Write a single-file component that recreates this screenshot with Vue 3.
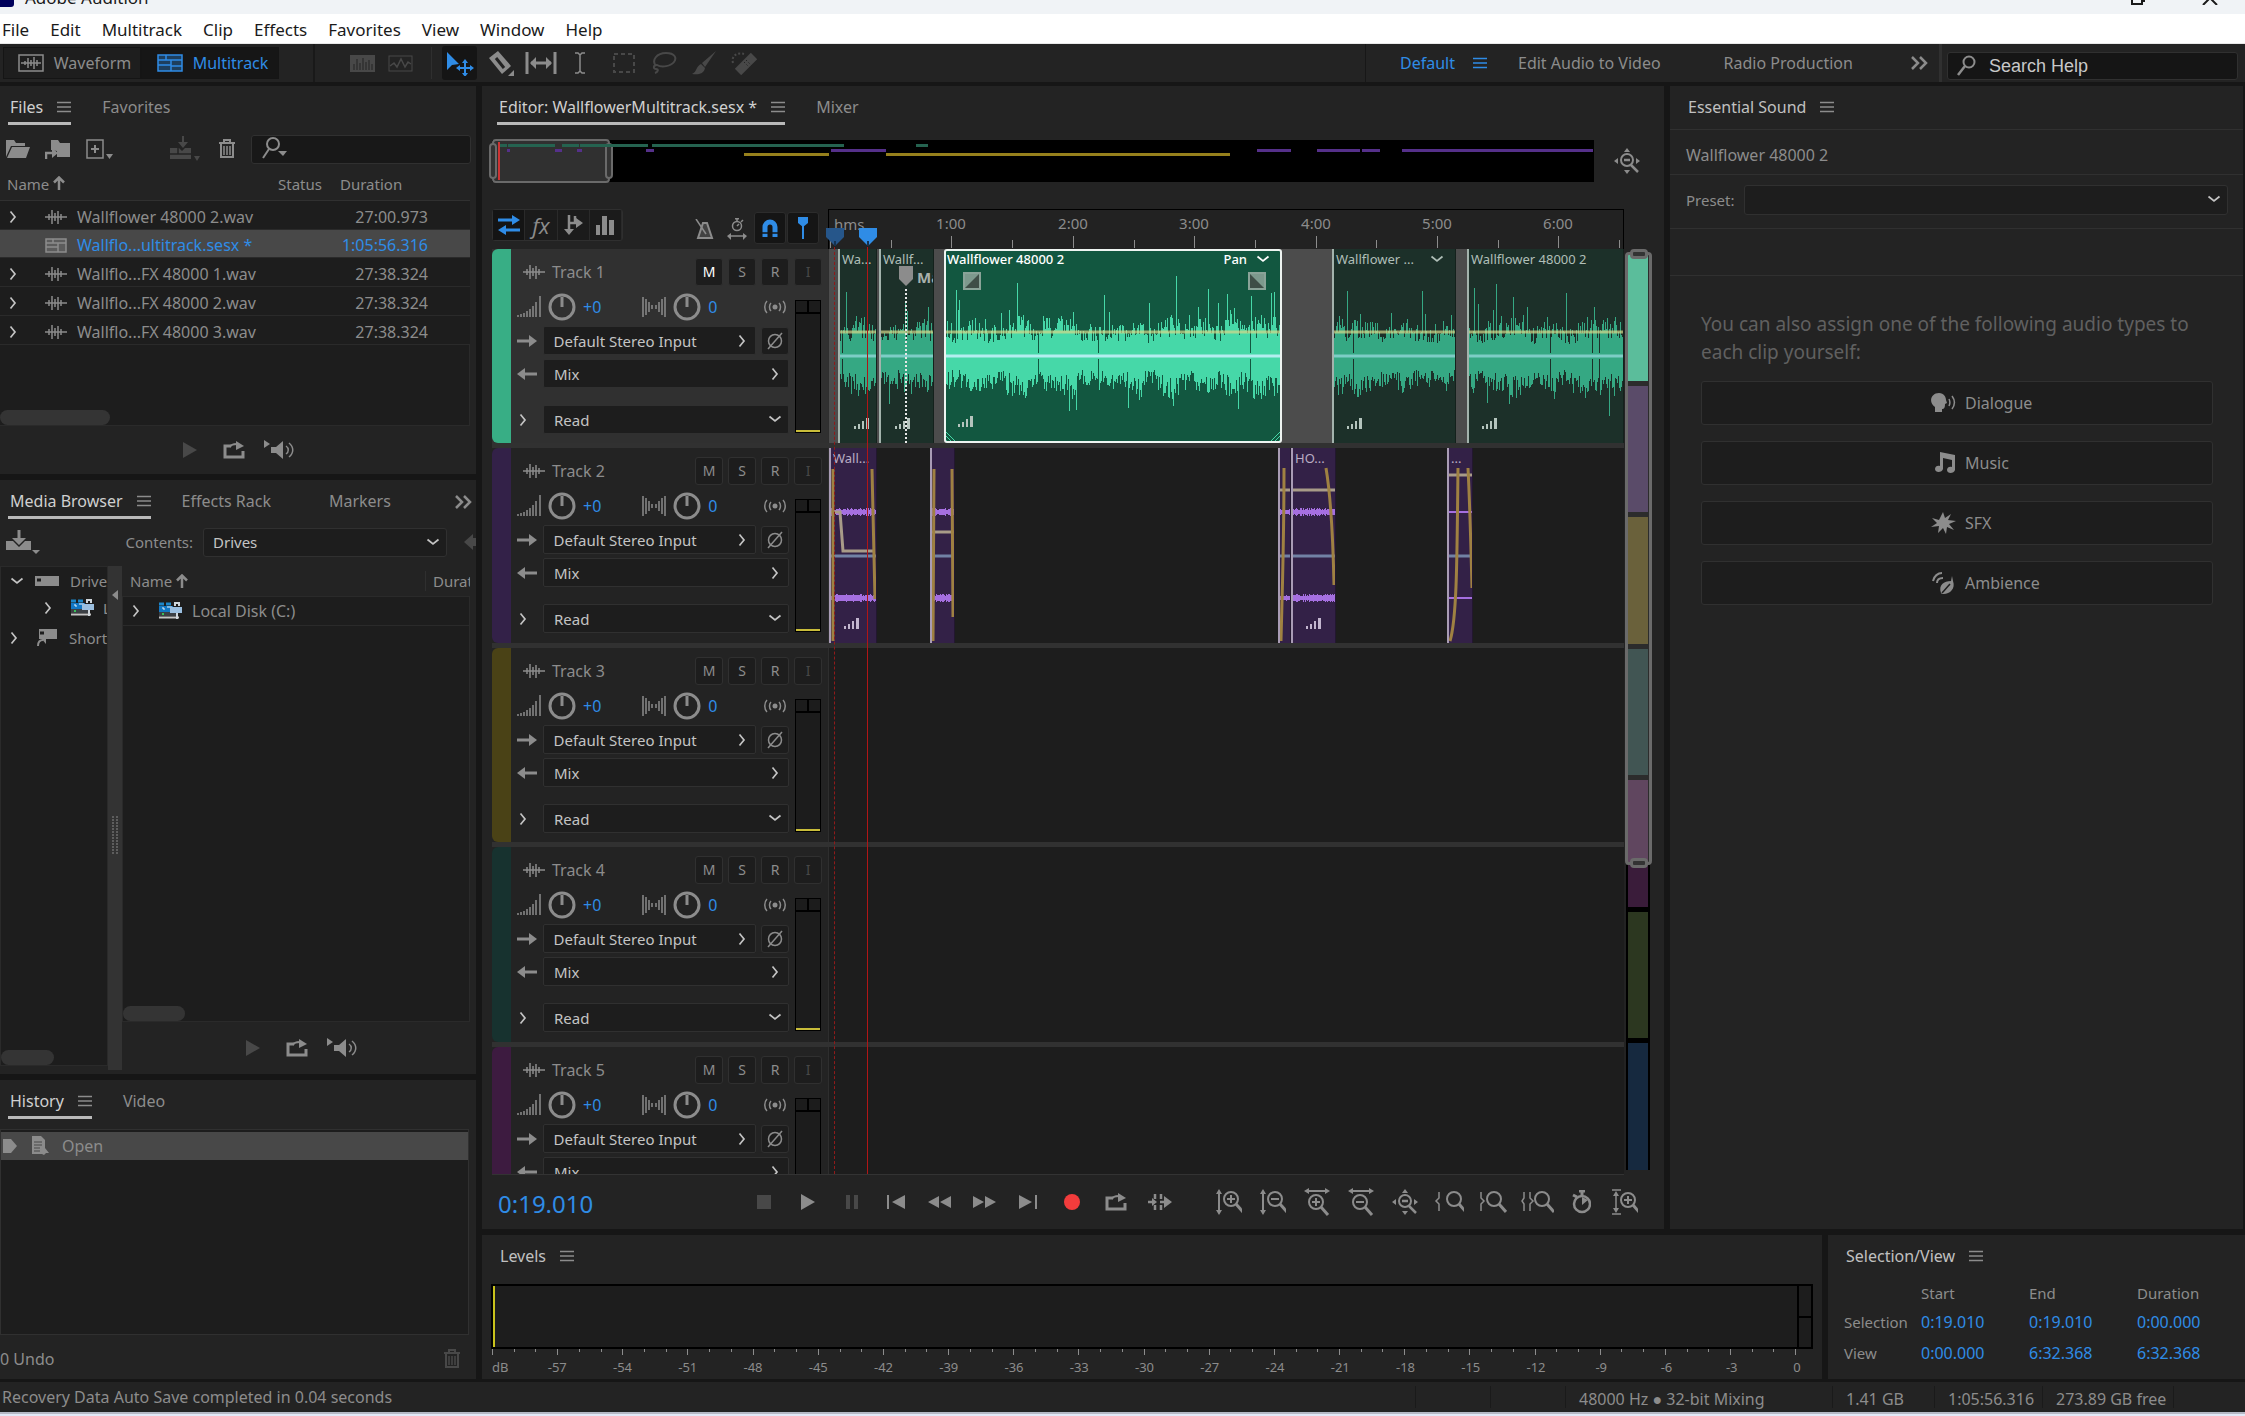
<script setup>
import { h } from 'vue'

const lens = (x, y, sign) =>
  `<circle cx="${x}" cy="${y}" r="7" stroke-width="2"/><path d="M${x + 5} ${y + 5}l7 8" stroke-width="3"/>` +
  (sign ? `<path d="M${x - 4} ${y}h8" stroke-width="2"/>` : '') +
  (sign === '+' ? `<path d="M${x} ${y - 4}v8" stroke-width="2"/>` : '')
const solid = (d) => `<path d="${d}" fill="currentColor" stroke="none"/>`

// name: [width, height, markup]
const icons = {
  menu: [14, 12, '<path d="M0 1.500h14M0 6h14M0 10.500h14" stroke-width="1.500"/>'],
  more: [18, 14, '<path d="M2 1l6 6-6 6M10 1l6 6-6 6" stroke-width="2.500"/>'],
  right: [8, 14, '<path d="M1.500 1.500L6 7l-4.500 5.500" stroke-width="1.700"/>'],
  down: [14, 8, '<path d="M1.500 1.500L7 6l5.500-4.500" stroke-width="1.700"/>'],
  up: [12, 14, '<path d="M6 14V2M1 6.500L6 1.500l5 5" stroke-width="2.500"/>'],
  waveView: [26, 18, '<rect x="1" y="1" width="24" height="16" stroke-width="1.500"/><path d="M3 9h20M7 7v4M10 4v10M13 6v6M16 3v12M19 6v6" stroke-width="1.500"/>'],
  multiView: [26, 18, '<rect x="1" y="1" width="24" height="16" fill="currentColor" fill-opacity=".35" stroke-width="1.500"/><path d="M1 6h24M9 1v5M1 11h13M14 6v11M14 12h11" stroke-width="1.500"/>'],
  spectral: [25, 17, '<rect width="25" height="17" fill="currentColor" stroke="none"/><path d="M4 15V9M7 15V4M10 15V8M13 15V3M16 15V7M19 15V5M22 15V9" stroke="#232323"/>'],
  pitch: [25, 17, '<rect x="1" y="1" width="23" height="15"/><path d="M2 11l4-3 3 4 4-8 4 8 3-5 3 2" stroke-width="1.500"/>'],
  move: [30, 26, solid('M2 2v18l5-5 7-1z') + '<path d="M20 12v12M14 18h12" stroke-width="2"/>' + solid('M20 9l3 4h-6zM20 27l3-4h-6zM11 18l4-3v6zM29 18l-4-3v6z')],
  razor: [28, 26, solid('M2 8l9-7 13 15-9 8z') + '<path d="M9 8l8 10" stroke="#232323" stroke-width="3"/>' + solid('M27 20v6h-6z')],
  slip: [32, 22, '<path d="M2 0v22M30 0v22M6 11h20" stroke-width="3"/>' + solid('M5 11l6-6v12zM27 11l-6-6v12z')],
  ibeam: [12, 22, '<path d="M1 1h3l2 2 2-2h3M6 3v16M1 21h3l2-2 2 2h3" stroke-width="1.500"/>'],
  marquee: [22, 20, '<rect x="1" y="1" width="20" height="18" stroke-width="2" stroke-dasharray="4 3"/>'],
  lasso: [26, 22, '<path d="M5 14C0 8 6 1 15 1s11 5 8 9-12 6-17 3c-4 0-4 4-1 4s2 3-1 4" stroke-width="2"/>'],
  brush: [26, 24, solid('M25 0L11 12l3 4zM10 13l4 4c-1 6-7 7-13 6 5-2 4-8 9-10z')],
  heal: [28, 24, '<path d="M8 21L24 5" stroke-width="9"/><path d="M14 11l6 6M16 9l6 6" stroke="#232323" stroke-dasharray="1.500 2"/><path d="M3 12C1 5 7 1 14 3" stroke-dasharray="2 2" stroke-width="2"/>'],
  find: [20, 22, '<circle cx="13" cy="7" r="5.500" stroke-width="2"/><path d="M9 11l-7 9" stroke-width="2.500"/>'],
  findMenu: [26, 24, '<circle cx="11" cy="7" r="6" stroke-width="2"/><path d="M7 12l-6 9" stroke-width="2"/>' + solid('M16 14h9l-4 5z')],
  folder: [24, 20, solid('M0 18V1h8l2 3h9v3H5zM6 8h18l-4 11H1z')],
  importFile: [26, 22, solid('M6 12V2h7l2 3h10v14H12v-6z') + '<path d="M1 21v-6h7" stroke-width="2.500"/>' + solid('M7 10l6 5-6 5z')],
  newFile: [27, 22, '<rect x="1" y="2" width="16" height="18" stroke-width="1.500"/><path d="M9 7v8M5 11h8" stroke-width="2"/>' + solid('M20 16h7l-3.500 5z')],
  insert: [30, 26, solid('M0 12h9l3 3 3-3h6v11H0z') + '<path d="M13 0v8" stroke-width="2"/><path d="M0 18h21M8 12v6" stroke="#232323" stroke-width="1.500"/>' + solid('M8 6h10l-5 6zM24 20h6l-3 5z')],
  trash: [18, 20, '<path d="M1 4h16M6 3V1h6v2M3 5v13h12V5" stroke-width="2"/><path d="M6 7v9M9 7v9M12 7v9" stroke-width="1.500"/>'],
  wave: [22, 16, '<path d="M0 8h22M4 5v6M7 1v14M10 4v8M13 2v13M16 5v6" stroke-width="1.500"/>'],
  session: [22, 15, '<rect x="1" y="1" width="20" height="13" fill="currentColor" fill-opacity=".3" stroke-width="1.500"/><path d="M1 5h20M8 1v4M1 9h12M13 5v9" stroke-width="1.500"/>'],
  play: [16, 16, solid('M1 0l14 8-14 8z')],
  loop: [22, 18, '<path d="M8 5H2v11h18v-6" stroke-width="3"/><path d="M7 6c1-3 4-3 7-3" stroke-width="2"/>' + solid('M13 0l8 5-8 4z')],
  speaker: [31, 20, solid('M0 0l6 4-6 4zM7 7h5l7-6v18l-7-6H7z') + '<path d="M22 6c3 2 3 6 0 8M25 3c5 4 5 10 0 14" stroke-width="1.500"/>'],
  mount: [34, 24, '<path d="M13 0v9" stroke-width="3"/>' + solid('M6 8h14l-7 7zM0 11h7l6 6 6-6h6v9H0zM26 20h8l-4 4z')],
  back: [12, 16, solid('M0 8l9-8v4h3v8H9v4z')],
  drive: [24, 10, solid('M0 0h24v10H0z') + '<path d="M2 4h4" stroke="#1d1d1d" stroke-width="3"/>'],
  shortcut: [20, 18, solid('M2 0h18v10H2z') + '<path d="M3 4h4" stroke="#1d1d1d" stroke-width="3"/><path d="M1 17c0-4 1-6 5-6" stroke-width="2"/>' + solid('M3 8h6v7z')],
  disk: [24, 19, '<path d="M0 2h5M7 2h5" stroke="#1d86c8" stroke-width="3"/><path d="M0 7h14" stroke="#1177c4" stroke-width="6"/><path d="M3 6h2v2M8 5h5" stroke="#e8f2fa"/><path d="M0 12h18" stroke="#3c4045" stroke-width="4"/><path d="M0 15.500h20" stroke="#c5c5c5" stroke-width="2"/><rect x="11" y="5" width="12" height="6" fill="#9bbfe0" stroke="none"/><path d="M16 4V1h4v3M18 11v6" stroke="#cfd6dc" stroke-width="2"/><path d="M3 12h2" stroke="#39c25b" stroke-width="2"/>'],
  grip: [6, 38, '<path d="M1 0v38M5 0v38" stroke-dasharray="2 1" stroke="#8a8a8a"/>'],
  left: [6, 10, solid('M6 0v10L0 5z')],
  openDoc: [18, 20, solid('M0 0h9l4 4v8l4 5h-3l-2 2-2-1H0z') + '<path d="M2 6h8M2 9h8M2 12h6M2 15h6" stroke="#484848"/>'],
  pointer: [14, 14, solid('M0 0h8l6 7-6 7H0z')],
  swap: [22, 20, '<path d="M0 5h15M22 15H7" stroke-width="3"/>' + solid('M14 0l8 5-8 5zM8 10l-8 5 8 5z')],
  sends: [20, 20, '<path d="M6 0v16M12 1v8M6 8h8" stroke-width="2.500"/>' + solid('M13 3l7 5-7 5zM1 14h10l-5 6z')],
  eqBars: [18, 20, solid('M0 10h4v10H0zM6 1h5v19H6zM13 5h5v15h-5z')],
  metronome: [20, 20, '<path d="M3 19L8 4h4l5 15z" fill="currentColor" fill-opacity=".3" stroke-width="2"/><path d="M1 0l10 15" stroke-width="1.500"/>'],
  stretch: [20, 22, '<circle cx="10" cy="8" r="4.500" stroke-width="1.500"/><path d="M8 .7h4M10 1v2M14 4l2-2M10 8l2-2M2 18h16" stroke-width="1.500"/>' + solid('M0 18l4-3v7zM20 18l-4-3v7z')],
  magnet: [18, 20, '<path d="M4 19V9a5 5 0 0 1 10 0v10" stroke-width="5"/><path d="M1 15h6M11 15h6" stroke="#161616" stroke-width="1.500"/>'],
  pin: [12, 22, solid('M1 0h10v6L6 10 1 6z') + '<path d="M6 8v14" stroke-width="2"/>'],
  volume: [24, 22, '<path d="M1 21v-2M4 21v-3M7 21v-4M10 21v-6M13 21v-8M16 21v-11M19 21V6M23 21V0" stroke-width="1.500"/>'],
  pan: [24, 20, '<path d="M1 0v20M4 2v16M7 5v10M10 8v4M14 8v4M17 5v10M20 2v16M23 0v20" stroke-width="1.500"/>'],
  knob: [28, 28, '<circle cx="14" cy="14" r="12" stroke-width="3"/><path d="M14 4v10" stroke-width="3"/>'],
  monitor: [24, 16, '<circle cx="12" cy="8" r="2.500" fill="currentColor" stroke="none"/><path d="M8 4c-2 2-2 6 0 8M16 4c2 2 2 6 0 8M4 2C1 5 1 11 4 14M20 2c3 3 3 9 0 12" stroke-width="1.500"/>'],
  arrowIn: [20, 12, '<path d="M0 6h14" stroke-width="3"/>' + solid('M12 0l8 6-8 6z')],
  arrowOut: [20, 12, '<path d="M20 6H6" stroke-width="3"/>' + solid('M8 0L0 6l8 6z')],
  phase: [18, 18, '<circle cx="9" cy="9" r="6.500" stroke-width="1.500"/><path d="M2 17L16 1" stroke-width="1.500"/>'],
  signal: [15, 11, solid('M0 8h2v3H0zM4 6h2v5H4zM8 3h2v8H8zM12 0h3v11h-3z')],
  stop: [16, 14, solid('M1 0h14v14H1z')],
  pause: [14, 14, solid('M1 0h4v14H1zM9 0h4v14H9z')],
  prev: [18, 14, solid('M0 0h2v14H0zM18 0v14L5 7z')],
  rewind: [24, 12, solid('M11 0v12L0 6zM23 0v12L12 6z')],
  forward: [24, 12, solid('M1 0v12l11-6zM13 0v12l11-6z')],
  next: [18, 14, solid('M16 0h2v14h-2zM0 0v14l13-7z')],
  record: [16, 16, '<circle cx="8" cy="8" r="8" fill="#f23c3c" stroke="none"/>'],
  skip: [24, 18, '<path d="M0 9h6M7 1v5M7 12v5M13 1v5M13 12v5M12 9h6" stroke-width="2.500"/>' + solid('M4 5l5 4-5 4zM16 3l8 6-8 6z')],
  zInV: [26, 26, '<path d="M3 3v20" stroke-width="2"/>' + solid('M3 0l3 5H0zM3 26l3-5H0z') + lens(15, 10, '+')],
  zOutV: [26, 26, '<path d="M3 3v20" stroke-width="2"/>' + solid('M3 0l3 5H0zM3 26l3-5H0z') + lens(15, 10, '-')],
  zInH: [26, 28, '<path d="M3 3h20" stroke-width="2"/>' + solid('M0 3l5-3v6zM26 3l-5-3v6z') + lens(12, 14, '+')],
  zOutH: [26, 28, '<path d="M3 3h20" stroke-width="2"/>' + solid('M0 3l5-3v6zM26 3l-5-3v6z') + lens(12, 14, '-')],
  zFull: [26, 26, solid('M13 0l3 4h-6zM13 26l3-4h-6zM0 13l4-3v6zM26 13l-4-3v6z') + '<circle cx="13" cy="12" r="6" stroke-width="2"/><path d="M10 12h6M17 17l7 7" stroke-width="2.500"/>'],
  zLeft: [30, 22, '<path d="M5 1v6l-3 3 3 3v7" stroke-width="1.500"/>' + lens(20, 8, '')],
  zRight: [28, 22, '<path d="M2 1v6l3 3-3 3v7" stroke-width="1.500"/>' + lens(15, 8, '')],
  zSel: [34, 22, '<path d="M4 1v6l-2 3 2 3v7M10 1v6l3 3-3 3v7" stroke-width="1.500"/>' + lens(22, 8, '')],
  timer: [20, 24, '<circle cx="11" cy="14" r="8" stroke-width="2.500"/><path d="M8 1h6M11 1v4M2 5l4 2" stroke-width="3"/>' + solid('M11 7l6 3-6 5z')],
  zTrack: [26, 26, '<path d="M0 1h9M0 25h9M4 4v18" stroke-width="1.500"/>' + solid('M4 2l3 5H1zM4 24l3-5H1z') + lens(16, 11, '+')],
  dialogue: [25, 20, solid('M8 0c5 0 7 4 7 7l1 3-2 1c0 4-1 5-3 5v3H4v-5C-3 9 0 0 8 0z') + '<path d="M18 6c1 2 1 5 0 7M21 3c3 4 3 9 0 13" stroke-width="1.500"/>'],
  music: [22, 22, solid('M6 0l15 3v15c-1 4-8 4-8 0 0-3 3-4 5-3V8L9 6v11c-1 4-8 4-8 0 0-3 3-4 5-3z')],
  sfx: [25, 22, solid('M12 0l2 6 6-4-3 6 8 1-7 3 5 6-7-3-1 7-3-6-5 5 1-7-8 1 6-4-5-5 7 2z')],
  ambience: [24, 23, '<path d="M1 9C2 4 6 1 10 1M5 11c0-3 2-5 6-5" stroke-width="2"/>' + solid('M20 4l1 5c3 8-4 14-11 13l-1-1C6 13 12 9 19 9z') + '<path d="M10 21l8-9" stroke="#1d1d1d" stroke-width="1.500"/>'],
  fadeIn: [18, 18, '<rect x="1" y="1" width="16" height="16" fill="#7d998d" stroke="#8aa398" stroke-width="2"/><path d="M16 2v14H2z" fill="#3f4e47" stroke="none"/>'],
  fadeOut: [18, 18, '<rect x="1" y="1" width="16" height="16" fill="#7d998d" stroke="#8aa398" stroke-width="2"/><path d="M2 2v14h14z" fill="#3f4e47" stroke="none"/>'],
  flag: [14, 20, solid('M0 0h14v13l-7 7-7-7z')],
  head: [18, 18, solid('M0 0h18v9l-9 9-9-9z') + '<path d="M9 13v5" stroke="#16324f" stroke-width="2"/>'],
  restore: [14, 6, '<path d="M1 0v4h10V0M13 0v2" stroke-width="2"/>'],
  close: [16, 5, '<path d="M1 5l7-7 7 7" stroke-width="2"/>'],
}

const Icon = (props) => {
  const [w, ht, markup] = icons[props.name]
  return h('svg', {
    width: w,
    height: ht,
    viewBox: `0 0 ${w} ${ht}`,
    fill: 'none',
    stroke: 'currentColor',
    'aria-hidden': 'true',
    innerHTML: markup,
  })
}
Icon.props = ['name']

const menus = ['File', 'Edit', 'Multitrack', 'Clip', 'Effects', 'Favorites', 'View', 'Window', 'Help']

const files = [
  { name: 'Wallflower 48000 2.wav', duration: '27:00.973', icon: 'wave' },
  { name: 'Wallflo...ultitrack.sesx *', duration: '1:05:56.316', icon: 'session', selected: true },
  { name: 'Wallflo...FX 48000 1.wav', duration: '27:38.324', icon: 'wave' },
  { name: 'Wallflo...FX 48000 2.wav', duration: '27:38.324', icon: 'wave' },
  { name: 'Wallflo...FX 48000 3.wav', duration: '27:38.324', icon: 'wave' },
]

// Overview strip, pixels from its left edge
const overview = [
  ...[[7, 8], [16, 47], [70, 17], [88, 68], [160, 192], [424, 12]].map(([x, w]) => ({ x, w, lane: 'teal' })),
  ...[[15, 3], [63, 7], [85, 5], [154, 8], [339, 55], [765, 34], [825, 43], [870, 18], [910, 191]].map(([x, w]) => ({ x, w, lane: 'violet' })),
  ...[[252, 85], [394, 344]].map(([x, w]) => ({ x, w, lane: 'gold' })),
]

const rulerTicks = Array.from({ length: 14 }, (_, i) => ({
  x: 1 + Math.round(i * 60.7),
  major: i % 2 === 0,
  label: i === 0 || i % 2 ? '' : `${i / 2}:00`,
}))

function random(seed) {
  let s = seed
  return () => {
    s = (s * 16807) % 2147483647
    return s / 2147483647
  }
}

// Filled outline of a mono waveform around the line y = 107
function speech(width, seed) {
  const r = random(seed)
  let d = ''
  let swell = 1
  for (let x = 0; x < width; x++) {
    swell += (r() - 0.5) * 0.25
    swell = Math.min(1.2, Math.max(0.8, swell))
    let up = (15 + r() * 20) * swell
    let dn = (17 + r() * 19) * swell
    const k = r()
    if (k < 0.035) up += 22 + r() * 24
    else if (k < 0.05) dn += 14 + r() * 20
    else if (k < 0.15) up += r() * 18
    else if (k > 0.985) { up = 3; dn = 3 }
    d += `M${x} ${Math.round(107 - up)}h1V${Math.round(107 + dn)}h-1z`
  }
  return d
}

function hum(width, seed, size) {
  const r = random(seed)
  let d = ''
  for (const mid of [64, 150]) {
    for (let x = 0; x < width; x++) {
      const a = Math.max(1, Math.round(size * (0.5 + r() * 0.5)))
      d += `M${x} ${mid - a}h1V${mid + a}h-1z`
    }
  }
  return d
}

const voiceClips = [
  { x: 9, w: 39, title: 'Wa...', wave: speech(38, 77), signal: 14 },
  { x: 50, w: 55, title: 'Wallf...', wave: speech(54, 1234), signal: 14, marker: true },
  { x: 115, w: 338, title: 'Wallflower 48000 2', wave: speech(336, 991), signal: 12, selected: true },
  { x: 503, w: 124, title: 'Wallflower ...', wave: speech(122, 4411), signal: 13, menu: true },
  { x: 638, w: 157, title: 'Wallflower 48000 2', wave: speech(157, 8080), signal: 13 },
]

const roomClips = [
  { x: 0, w: 48, title: 'Wall...', wave: hum(47, 5, 4), fades: 'M4 21V193M43 21L46 151', level: 'M0 64H11L14 103H46', signal: 13 },
  { x: 101, w: 25, title: '', wave: hum(25, 9, 4), fades: 'M4 21L3 193M22 21L23 169', level: 'M0 84H24' },
  { x: 449, w: 13, title: '', wave: hum(12, 21, 3), fades: 'M6 20C6 100 4 150 3 193', level: 'M0 42H12' },
  { x: 462, w: 45, title: 'HO...', wave: hum(45, 31, 4), fades: 'M35 20C40 50 42 90 43 137', level: 'M0 42H44', signal: 13 },
  { x: 618, w: 26, title: '...', wave: hum(26, 41, 1), fades: 'M11 20C10 110 10 170 3 193M21 20C23 60 24 100 25 140', level: 'M0 27H25' },
]

const tracks = [
  { name: 'Track 1', color: '#38ae85', selected: true },
  { name: 'Track 2', color: '#332148' },
  { name: 'Track 3', color: '#4a4216' },
  { name: 'Track 4', color: '#17322f' },
  { name: 'Track 5', color: '#3d1b40' },
]

const stripColors = ['#5bbd9b', '#5a4b69', '#6a613b', '#415553', '', '#2c3720', '#16293f']

const transport = [
  ['stop', 'Stop', true], ['play', 'Play'], ['pause', 'Pause', true], ['prev', 'Move to previous'],
  ['rewind', 'Rewind'], ['forward', 'Fast forward'], ['next', 'Move to next'], ['record', 'Record'],
  ['loop', 'Loop playback'], ['skip', 'Skip selection'],
]
const zooms = [
  ['zInV', 'Zoom in amplitude'], ['zOutV', 'Zoom out amplitude'], ['zInH', 'Zoom in time'],
  ['zOutH', 'Zoom out time'], ['zFull', 'Zoom out full'], ['zLeft', 'Zoom in at in point'],
  ['zRight', 'Zoom in at out point'], ['zSel', 'Zoom to selection'], ['timer', 'Zoom to time'],
  ['zTrack', 'Zoom selected track'],
]

const dbLabels = ['dB', ...Array.from({ length: 20 }, (_, i) => String(-57 + i * 3))]
const audioTypes = [['dialogue', 'Dialogue'], ['music', 'Music'], ['sfx', 'SFX'], ['ambience', 'Ambience']]
const times = [
  ['Selection', '0:19.010', '0:19.010', '0:00.000'],
  ['View', '0:00.000', '6:32.368', '6:32.368'],
]
</script>

<template>
  <div class="app">
    <header class="titlebar">
      <i class="logo"></i>
      <span>Adobe Audition</span>
      <Icon name="restore" class="restore" />
      <Icon name="close" class="close" />
    </header>

    <nav class="menubar">
      <a v-for="m in menus" :key="m" href="#">{{ m }}</a>
    </nav>

    <div class="toolbar">
      <div class="views">
        <button type="button"><Icon name="waveView" />Waveform</button>
        <button type="button" class="on"><Icon name="multiView" />Multitrack</button>
      </div>
      <div class="displays">
        <button type="button" aria-label="Spectral display" disabled><Icon name="spectral" /></button>
        <button type="button" aria-label="Pitch display" disabled><Icon name="pitch" /></button>
      </div>
      <div class="tools">
        <button type="button" class="on" aria-label="Move"><Icon name="move" /></button>
        <button type="button" aria-label="Razor"><Icon name="razor" /></button>
        <button type="button" aria-label="Slip"><Icon name="slip" /></button>
        <button type="button" aria-label="Time selection"><Icon name="ibeam" /></button>
        <button type="button" aria-label="Marquee selection" disabled><Icon name="marquee" /></button>
        <button type="button" aria-label="Lasso selection" disabled><Icon name="lasso" /></button>
        <button type="button" aria-label="Paintbrush" disabled><Icon name="brush" /></button>
        <button type="button" aria-label="Spot healing" disabled><Icon name="heal" /></button>
      </div>
      <div class="workspaces">
        <a href="#" class="blue">Default <Icon name="menu" /></a>
        <a href="#">Edit Audio to Video</a>
        <a href="#">Radio Production</a>
        <button type="button" aria-label="More workspaces"><Icon name="more" /></button>
      </div>
      <div class="help">
        <label class="helpbox">
          <Icon name="find" />
          <input type="text" placeholder="Search Help" aria-label="Search Help" />
        </label>
      </div>
    </div>

    <div class="workspace">
      <aside class="left">
        <section class="panel files">
          <div class="tabs">
            <h2 class="tab active">Files <Icon name="menu" /></h2>
            <h2 class="tab">Favorites</h2>
          </div>
          <div class="fileTools">
            <button type="button" aria-label="Open file"><Icon name="folder" /></button>
            <button type="button" aria-label="Import file"><Icon name="importFile" /></button>
            <button type="button" aria-label="New file"><Icon name="newFile" /></button>
            <button type="button" aria-label="Insert into multitrack" class="insert" disabled><Icon name="insert" /></button>
            <button type="button" aria-label="Delete"><Icon name="trash" /></button>
            <label class="search"><Icon name="findMenu" /><input type="text" aria-label="Search files" /></label>
          </div>
          <div class="fileArea">
            <table class="fileTable">
              <thead>
                <tr><th class="cName">Name<Icon name="up" /></th><th class="cStatus">Status</th><th>Duration</th></tr>
              </thead>
              <tbody>
                <tr v-for="f in files" :key="f.name" :class="{ selected: f.selected }">
                  <td>
                    <div class="fileName">
                      <span class="twist"><Icon v-if="!f.selected" name="right" /></span>
                      <Icon :name="f.icon" />
                      <span>{{ f.name }}</span>
                    </div>
                  </td>
                  <td></td>
                  <td class="num">{{ f.duration }}</td>
                </tr>
              </tbody>
            </table>
            <div class="listRest"><i class="thumb wide"></i></div>
          </div>
          <div class="preview">
            <button type="button" aria-label="Play preview" disabled><Icon name="play" /></button>
            <button type="button" aria-label="Loop preview"><Icon name="loop" /></button>
            <button type="button" aria-label="Auto-play"><Icon name="speaker" /></button>
          </div>
        </section>

        <section class="panel media">
          <div class="tabs">
            <h2 class="tab active">Media Browser <Icon name="menu" /></h2>
            <h2 class="tab">Effects Rack</h2>
            <h2 class="tab markers">Markers</h2>
            <button type="button" class="moreTabs" aria-label="More panels"><Icon name="more" /></button>
          </div>
          <div class="mediaTools">
            <button type="button" aria-label="Add shortcut"><Icon name="mount" /></button>
            <label for="contents">Contents:</label>
            <span class="pick">
              <select id="contents"><option>Drives</option></select>
              <Icon name="down" />
            </span>
            <button type="button" aria-label="Back" disabled><Icon name="back" /></button>
          </div>
          <div class="mediaBody">
            <div class="tree">
              <div class="branch"><Icon name="down" /><Icon name="drive" /><span>Drives</span></div>
              <div class="branch child"><Icon name="right" /><Icon name="disk" /><span>Local Disk (C:)</span></div>
              <div class="branch last"><Icon name="right" /><Icon name="shortcut" /><span>Shortcuts</span></div>
              <i class="thumb small"></i>
            </div>
            <div class="splitter"><Icon name="left" /><Icon name="grip" class="grip" /></div>
            <div class="drives">
              <div class="drivesHead"><span>Name<Icon name="up" /></span><span class="dur">Duration</span></div>
              <div class="drivesList">
                <div class="driveRow"><Icon name="right" /><Icon name="disk" /><span>Local Disk (C:)</span></div>
                <i class="thumb mid"></i>
              </div>
              <div class="preview">
                <button type="button" aria-label="Play preview" disabled><Icon name="play" /></button>
                <button type="button" aria-label="Loop preview"><Icon name="loop" /></button>
                <button type="button" aria-label="Auto-play"><Icon name="speaker" /></button>
              </div>
            </div>
          </div>
        </section>

        <section class="panel history">
          <div class="tabs">
            <h2 class="tab active">History <Icon name="menu" /></h2>
            <h2 class="tab">Video</h2>
          </div>
          <div class="historyList">
            <div class="historyRow"><Icon name="pointer" /><Icon name="openDoc" /><span>Open</span></div>
          </div>
          <div class="undo">
            <span>0 Undo</span>
            <button type="button" aria-label="Delete history" disabled><Icon name="trash" /></button>
          </div>
        </section>
      </aside>

      <div class="right">
        <div class="upper">
          <main class="panel editor">
            <div class="tabs">
              <h2 class="tab active">Editor: WallflowerMultitrack.sesx * <Icon name="menu" /></h2>
              <h2 class="tab">Mixer</h2>
            </div>

            <div class="overviewRow">
              <div class="overview">
                <div class="window"><b></b><b></b></div>
                <i v-for="(s, i) in overview" :key="i" :class="s.lane" :style="{ left: s.x + 'px', width: s.w + 'px' }"></i>
                <i class="ohead"></i>
              </div>
              <button type="button" aria-label="Zoom out full"><Icon name="zFull" /></button>
            </div>

            <div class="session">
              <div class="timeline">
                <div class="timeTop">
                  <div class="modes">
                    <div class="group">
                      <button type="button" class="blue" aria-label="Inputs/Outputs"><Icon name="swap" /></button>
                      <button type="button" class="fx" aria-label="Effects">fx</button>
                      <button type="button" aria-label="Sends"><Icon name="sends" /></button>
                      <button type="button" aria-label="EQ"><Icon name="eqBars" /></button>
                    </div>
                    <button type="button" class="free" aria-label="Metronome"><Icon name="metronome" /></button>
                    <button type="button" class="free" aria-label="Time stretch"><Icon name="stretch" /></button>
                    <button type="button" class="toggle" aria-label="Snapping"><Icon name="magnet" /></button>
                    <button type="button" class="toggle" aria-label="Snap to markers"><Icon name="pin" /></button>
                  </div>
                  <div class="ruler">
                    <span class="hms">hms</span>
                    <i v-for="t in rulerTicks" :key="t.x" class="tick" :class="{ major: t.major }" :style="{ left: t.x + 'px' }">
                      <span v-if="t.label">{{ t.label }}</span>
                    </i>
                  </div>
                </div>

                <div class="tracks">
                  <div v-for="(t, i) in tracks" :key="t.name" class="track" :class="{ selected: t.selected }">
                    <i class="swatch" :style="{ background: t.color }"></i>
                    <div class="strip">
                      <div class="controls">
                        <div class="row title">
                          <Icon name="wave" />
                          <span>{{ t.name }}</span>
                          <div class="msr">
                            <button type="button" aria-label="Mute" :class="{ lit: i === 0 }">M</button>
                            <button type="button" aria-label="Solo">S</button>
                            <button type="button" aria-label="Record arm">R</button>
                          </div>
                        </div>
                        <div class="row knobs">
                          <Icon name="volume" /><Icon name="knob" /><span class="val">+0</span>
                          <Icon name="pan" class="pan" /><Icon name="knob" /><span class="val">0</span>
                          <Icon name="monitor" class="mon" />
                        </div>
                        <div class="row input">
                          <Icon name="arrowIn" />
                          <button type="button" class="field">Default Stereo Input<Icon name="right" /></button>
                          <button type="button" class="phase" aria-label="Invert phase"><Icon name="phase" /></button>
                        </div>
                        <div class="row output">
                          <Icon name="arrowOut" />
                          <button type="button" class="field">Mix<Icon name="right" /></button>
                        </div>
                        <div class="row auto">
                          <Icon name="right" />
                          <span class="pick field">
                            <select :aria-label="t.name + ' automation'"><option>Read</option></select>
                            <Icon name="down" />
                          </span>
                        </div>
                      </div>
                      <div class="meterCol">
                        <button type="button" aria-label="Monitor input" disabled>I</button>
                        <div class="meter"><b></b><b></b><i></i><i></i></div>
                      </div>
                    </div>
                    <div class="lane">
                      <template v-if="i === 0">
                        <div v-for="c in voiceClips" :key="c.x" class="clip voice" :class="{ picked: c.selected }" :style="{ left: c.x + 'px', width: c.w + 'px' }">
                          <svg class="graph" width="100%" height="194">
                            <path :d="c.wave" class="body" />
                            <path d="M0 83H900" class="gain" />
                            <path d="M0 107H900" class="panLine" />
                          </svg>
                          <span class="label">{{ c.title }}</span>
                          <Icon v-if="c.menu" name="down" class="clipMenu" />
                          <template v-if="c.selected">
                            <span class="panLabel">Pan <Icon name="down" /></span>
                            <Icon name="fadeIn" class="fadeIn" />
                            <Icon name="fadeOut" class="fadeOut" />
                            <i class="corner bl"></i><i class="corner br"></i>
                          </template>
                          <template v-if="c.marker">
                            <Icon name="flag" class="flag" />
                            <b class="flagText">Marker</b>
                            <i class="flagLine"></i>
                          </template>
                          <Icon name="signal" class="signal" :style="{ left: c.signal + 'px' }" />
                        </div>
                      </template>
                      <template v-if="i === 1">
                        <div v-for="c in roomClips" :key="c.x" class="clip room" :style="{ left: c.x + 'px', width: c.w + 'px' }">
                          <svg class="graph" width="100%" height="194">
                            <path :d="c.wave" class="body" />
                            <path d="M0 108H900" class="panLine" />
                            <path :d="c.level" class="level" />
                            <path :d="c.fades" class="fades" />
                          </svg>
                          <span class="label">{{ c.title }}</span>
                          <Icon v-if="c.signal" name="signal" class="signal" :style="{ left: c.signal + 'px' }" />
                        </div>
                      </template>
                    </div>
                  </div>
                </div>

                <Icon name="head" class="head ghost" />
                <i class="headLine dashed"></i>
                <Icon name="head" class="head" />
                <i class="headLine"></i>
              </div>

              <div class="vscroll">
                <i v-for="(c, i) in stripColors" :key="i" :class="{ split: !c }" :style="{ background: c }"></i>
                <div class="vwindow"><b></b><b></b></div>
              </div>
            </div>

            <div class="transport">
              <output class="clock">0:19.010</output>
              <div class="buttons play">
                <button v-for="[icon, label, off] in transport" :key="icon" type="button" :aria-label="label" :disabled="off"><Icon :name="icon" /></button>
              </div>
              <div class="buttons">
                <button v-for="[icon, label] in zooms" :key="icon" type="button" :aria-label="label"><Icon :name="icon" /></button>
              </div>
            </div>
          </main>

          <section class="panel essential">
            <div class="tabs"><h2 class="tab solo">Essential Sound <Icon name="menu" /></h2></div>
            <div class="clipName">Wallflower 48000 2</div>
            <div class="preset">
              <label for="preset">Preset:</label>
              <span class="pick">
                <select id="preset"><option></option></select>
                <Icon name="down" />
              </span>
            </div>
            <div class="blank"></div>
            <div class="assign">
              <p>You can also assign one of the following audio types to each clip yourself:</p>
              <button v-for="[icon, label] in audioTypes" :key="icon" type="button">
                <span class="typeIcon"><Icon :name="icon" /></span><span class="typeText">{{ label }}</span>
              </button>
            </div>
          </section>
        </div>

        <div class="lower">
          <section class="panel levels">
            <div class="tabs"><h2 class="tab solo">Levels <Icon name="menu" /></h2></div>
            <div class="levelBox"><div class="levelBars"><i></i><i></i></div><div class="peaks"><i></i><i></i></div></div>
            <div class="scale">
              <div class="ticks"><i v-for="n in 61" :key="n" :class="{ big: n % 3 === 1 }"></i></div>
              <div class="dbs"><span v-for="l in dbLabels" :key="l"><em>{{ l }}</em></span></div>
            </div>
          </section>
          <section class="panel selview">
            <div class="tabs"><h2 class="tab solo">Selection/View <Icon name="menu" /></h2></div>
            <table>
              <thead><tr><th></th><th>Start</th><th>End</th><th>Duration</th></tr></thead>
              <tbody>
                <tr v-for="r in times" :key="r[0]">
                  <th>{{ r[0] }}</th>
                  <td v-for="(v, i) in r.slice(1)" :key="i">{{ v }}</td>
                </tr>
              </tbody>
            </table>
          </section>
        </div>
      </div>
    </div>

    <footer class="status">
      <span class="message">Recovery Data Auto Save completed in 0.04 seconds</span>
      <span class="cell"></span>
      <span class="cell"></span>
      <span class="cell rate">48000 Hz ● 32-bit Mixing</span>
      <span class="cell size">1.41 GB</span>
      <span class="cell len">1:05:56.316</span>
      <span class="cell free">273.89 GB free</span>
      <span class="cell end"></span>
    </footer>
    <div class="edge"></div>
  </div>
</template>

<style>
html,
body {
  margin: 0;
  background: #161616;
}
</style>

<style scoped>
* {
  box-sizing: border-box;
}
.app {
  height: 100vh;
  display: flex;
  flex-direction: column;
  overflow: hidden;
  background: #161616;
  color: #8c8c8c;
  font: 15px/20px "Noto Sans", "Open Sans", sans-serif;
}
svg {
  display: block;
  flex: none;
}
button,
input,
select {
  font: inherit;
  color: inherit;
  background: none;
  border: 0;
  padding: 0;
  margin: 0;
  border-radius: 0;
  outline: 0;
}
button {
  display: flex;
  align-items: center;
  justify-content: center;
}
button:disabled {
  color: #484848;
}
a {
  color: inherit;
  text-decoration: none;
}
h2 {
  margin: 0;
  font: inherit;
}
.blue {
  color: #2f8ce6;
}

/* Window frame */
.titlebar {
  height: 14px;
  flex: none;
  display: flex;
  align-items: flex-start;
  overflow: hidden;
  background: #f0f3f6;
  color: #1a1a1a;
  font-size: 17px;
}
.logo {
  width: 14px;
  height: 7px;
  margin-right: 11px;
  background: #00005b;
  border-radius: 0 0 3px 0;
}
.titlebar span {
  flex: 1;
  margin-top: -14px;
  line-height: 24px;
}
.restore {
  margin-right: 57px;
}
.close {
  margin-right: 27px;
}
.menubar {
  height: 30px;
  flex: none;
  display: flex;
  align-items: center;
  gap: 21px;
  padding: 2px 0 0 2px;
  background: #fff;
  border-bottom: 1px solid #e8e8e8;
  color: #1a1a1a;
  font-size: 17px;
}

/* Toolbar */
.toolbar {
  height: 38px;
  flex: none;
  display: flex;
  align-items: stretch;
  background: #232323;
}
.views {
  display: flex;
  width: 315px;
  padding: 3px 0 3px 3px;
  border-right: 2px solid #191919;
}
.views button {
  gap: 10px;
  width: 138px;
  padding-left: 5px;
  border: 1px solid #151515;
  font-size: 16px;
  background: #1e1e1e;
}
.views .on {
  background: #161616;
  color: #2f8ce6;
}
.displays {
  display: flex;
  gap: 13px;
  width: 117px;
  padding-left: 35px;
  margin: 3px 0;
  border-right: 1px solid #2f2f2f;
}
.displays button {
  align-self: center;
}
.tools {
  flex: 1;
  display: flex;
  padding: 2px 0 2px 10px;
  border-right: 1px solid #171717;
}
.tools button {
  width: 40px;
}
.tools button:first-child {
  width: 35px;
  margin-right: 4px;
  background: #151515;
  border-radius: 3px;
  color: #2f8ce6;
}
.tools button:nth-child(4) {
  width: 38px;
  margin-right: 5px;
}
.workspaces {
  display: flex;
  align-items: center;
  width: 576px;
  padding-left: 34px;
  border-right: 3px solid #303030;
  font-size: 16px;
}
.workspaces a {
  display: flex;
  align-items: center;
  gap: 18px;
  margin-right: 31px;
}
.workspaces a:nth-child(2) {
  margin-right: 63px;
}
.workspaces a:nth-child(3) {
  margin-right: auto;
}
.workspaces button {
  margin-right: 11px;
}
.help {
  width: 303px;
  padding: 8px 7px 2px 5px;
}
.helpbox {
  display: flex;
  align-items: center;
  gap: 13px;
  height: 28px;
  padding-left: 8px;
  background: #151515;
  border: 1px solid #303030;
  border-radius: 3px;
}
.helpbox input {
  flex: 1;
  min-width: 0;
  font: 18px/22px "Liberation Sans", Arial, sans-serif;
}
.helpbox input::placeholder {
  color: #c8c8c8;
  opacity: 1;
}

/* Panels */
.workspace {
  flex: 1;
  min-height: 0;
  display: flex;
  gap: 6px;
  padding-top: 4px;
}
.left {
  width: 476px;
  flex: none;
  display: flex;
  flex-direction: column;
  gap: 6px;
}
.right {
  flex: 1;
  min-width: 0;
  display: flex;
  flex-direction: column;
  gap: 6px;
}
.upper,
.lower {
  display: flex;
  gap: 6px;
}
.upper {
  flex: 1;
  min-height: 0;
}
.panel {
  background: #232323;
  display: flex;
  flex-direction: column;
  min-width: 0;
}
.tabs {
  display: flex;
  height: 39px;
  flex: none;
  padding-left: 8px;
  gap: 29px;
}
.tab {
  display: flex;
  align-items: center;
  gap: 14px;
  padding: 6px 0 0 2px;
  white-space: nowrap;
  font-size: 16px;
  border-bottom: 3px solid transparent;
}
.tab svg {
  color: #8c8c8c;
}
.active {
  color: #d0d0d0;
  border-bottom-color: #b9b9b9;
}
.solo {
  color: #c0c0c0;
}
.pick {
  position: relative;
  display: flex;
  background: #1d1d1d;
  border: 1px solid #303030;
  border-radius: 3px;
  color: #c4c4c4;
}
.pick select {
  appearance: none;
  flex: 1;
  padding-left: 9px;
  color: inherit;
}
.pick svg {
  position: absolute;
  right: 6px;
  top: 9px;
  pointer-events: none;
}
.preview {
  display: flex;
  align-items: center;
  justify-content: center;
  gap: 25px;
}
.preview button:last-child {
  margin-left: -6px;
}
.thumb {
  position: absolute;
  left: 0;
  bottom: 0;
  height: 15px;
  border-radius: 8px;
  background: #343434;
}
.wide {
  width: 110px;
}
.small {
  width: 53px;
}
.mid {
  width: 62px;
}

/* Files */
.files {
  height: 388px;
  flex: none;
}
.fileTools {
  display: flex;
  align-items: center;
  gap: 15px;
  height: 30px;
  margin: 9px 5px 8px 6px;
}
.insert {
  margin: 0 3px 0 42px;
}
.search {
  flex: 1;
  min-width: 0;
  display: flex;
  align-items: center;
  gap: 6px;
  height: 29px;
  padding-left: 10px;
  border: 1px solid #303030;
  border-radius: 3px;
  background: #181818;
}
.search input {
  flex: 1;
  min-width: 0;
  width: 0;
}
.fileArea {
  flex: 1;
  display: flex;
  flex-direction: column;
  margin-right: 6px;
}
.fileTable {
  table-layout: fixed;
  width: 100%;
  border-spacing: 0;
  text-align: left;
  font-size: 16px;
}
.fileTable th {
  height: 29px;
  padding: 0 0 4px 8px;
  font-weight: 400;
  font-size: 15px;
  border-bottom: 1px solid #303030;
}
.fileTable .cName {
  width: 270px;
  padding-left: 7px;
}
.fileTable .cStatus {
  width: 62px;
}
.cName svg {
  display: inline-block;
  margin-left: 4px;
}
.fileTable td {
  height: 29px;
  padding: 3px 0 0;
  background: #1d1d1d;
  border-bottom: 1px solid #2a2a2a;
}
.fileTable .num {
  text-align: right;
  padding-right: 42px;
}
.fileName {
  display: flex;
  align-items: center;
  gap: 10px;
  white-space: nowrap;
}
.twist {
  width: 35px;
  padding-left: 9px;
  color: #c4c4c4;
}
.fileTable .selected td {
  height: 28px;
  background: #484848;
}
.fileTable .selected {
  color: #2f8ce6;
}
.selected .fileName svg {
  color: #8c8c8c;
}
.listRest {
  position: relative;
  flex: 1;
  background: #1d1d1d;
  border: solid #2a2a2a;
  border-width: 0 1px 1px 0;
}
.files .preview {
  height: 48px;
}

/* Media browser */
.media {
  flex: 1;
  min-height: 0;
}
.markers {
  margin-left: 27px;
}
.moreTabs {
  margin: 4px 0 0 auto;
  padding-right: 4px;
}
.mediaTools {
  display: flex;
  align-items: center;
  height: 30px;
  margin: 8px 0 9px;
  padding-left: 6px;
  overflow: hidden;
}
.mediaTools label {
  margin: 0 10px 0 auto;
}
.mediaTools .pick {
  width: 244px;
  height: 29px;
  margin-right: 17px;
}
.mediaBody {
  flex: 1;
  min-height: 0;
  display: flex;
}
.tree {
  position: relative;
  width: 108px;
  margin-bottom: 8px;
  overflow: hidden;
  background: #1d1d1d;
  border: 1px solid #2a2a2a;
}
.branch {
  display: flex;
  align-items: center;
  gap: 11px;
  height: 28px;
  padding-left: 9px;
  white-space: nowrap;
}
.branch svg:first-child,
.driveRow svg:first-child {
  color: #c4c4c4;
}
.child {
  padding-left: 43px;
  gap: 19px;
  height: 26px;
}
.child span {
  margin-left: -11px;
}
.last {
  height: 34px;
  gap: 17px;
}
.last svg:nth-child(2) {
  margin-left: 2px;
}
.last span {
  margin-left: -5px;
}
.splitter {
  width: 14px;
  margin-bottom: 4px;
  display: flex;
  flex-direction: column;
  align-items: center;
  padding-top: 24px;
  background: #333;
}
.grip {
  margin: auto 0;
}
.drives {
  flex: 1;
  min-width: 0;
  display: flex;
  flex-direction: column;
  padding-right: 6px;
}
.drivesHead {
  display: flex;
  justify-content: space-between;
  align-items: center;
  height: 30px;
  padding-left: 8px;
}
.drivesHead span:first-child {
  display: flex;
  align-items: center;
  gap: 4px;
}
.dur {
  width: 45px;
  padding-left: 7px;
  border-left: 1px solid #2f2f2f;
  overflow: hidden;
}
.drivesList {
  position: relative;
  flex: 1;
  border: 1px solid #2a2a2a;
  background: #1d1d1d;
}
.driveRow {
  display: flex;
  align-items: center;
  height: 29px;
  padding-left: 9px;
  border-bottom: 1px solid #2a2a2a;
  font-size: 16px;
}
.driveRow svg:nth-child(2) {
  margin: 0 9px 0 19px;
}
.drives .preview {
  height: 52px;
  padding-left: 10px;
}

/* History */
.history {
  height: 299px;
  flex: none;
}
.historyList {
  flex: 1;
  margin: 10px 7px 0 0;
  padding-top: 2px;
  background: #1d1d1d;
  border: 1px solid #303030;
}
.historyRow {
  display: flex;
  align-items: center;
  gap: 15px;
  height: 28px;
  padding-left: 2px;
  background: #484848;
}
.historyRow span {
  margin-left: -3px;
  font-size: 16px;
}
.undo {
  display: flex;
  align-items: center;
  justify-content: space-between;
  height: 44px;
  padding: 4px 15px 0 0;
  font-size: 16px;
}

/* Editor */
.editor {
  flex: 1;
}
.editor .tabs {
  padding-left: 15px;
}
.overviewRow {
  display: flex;
  align-items: center;
  justify-content: space-between;
  height: 44px;
  margin: 14px 24px 26px 10px;
}
.overview {
  position: relative;
  flex: 1;
  height: 42px;
  margin-right: 20px;
  background: #000;
}
.overview > i {
  position: absolute;
  height: 3px;
}
.overview .teal {
  top: 4px;
  background: #256350;
}
.overview .violet {
  top: 9px;
  background: #55308a;
}
.overview .gold {
  top: 13px;
  background: #96801c;
}
.window {
  position: absolute;
  left: 0;
  top: -1px;
  width: 118px;
  height: 44px;
  display: flex;
  justify-content: space-between;
  align-items: center;
  border: 2px solid #6a6a6a;
  border-radius: 4px;
  background: #303030;
}
.window b {
  width: 8px;
  height: 36px;
  margin: 0 -5px;
  border: 2px solid #6a6a6a;
  border-radius: 4px;
  background: #333;
}
.overview .ohead {
  left: 6px;
  top: 2px;
  width: 2px;
  height: 38px;
  background: #c33;
}
.session {
  flex: 1;
  min-height: 0;
  display: flex;
  padding-left: 10px;
}
.timeline {
  position: relative;
  flex: 1;
  min-width: 0;
  display: flex;
  flex-direction: column;
  overflow: hidden;
  border-bottom: 1px solid #333;
}
.timeTop {
  display: flex;
  height: 40px;
  flex: none;
}
.modes {
  width: 336px;
  display: flex;
  align-items: center;
  padding-right: 9px;
}
.group {
  display: flex;
  height: 32px;
  width: 131px;
  margin-right: auto;
  margin-bottom: 9px;
  border: 1px solid #2f2f2f;
  border-radius: 3px;
  background: #1b1b1b;
}
.group button {
  flex: 1;
  border-right: 1px solid #2a2a2a;
}
.group button:first-child {
  background: #141414;
}
.fx {
  font: italic 22px/24px "Open Sans", sans-serif;
}
.free {
  width: 32px;
}
.toggle {
  width: 32px;
  height: 32px;
  margin-left: 1px;
  margin-bottom: 3px;
  border: 1px solid #2c2c2c;
  border-radius: 3px;
  background: #151515;
  color: #2f8ce6;
}
.ruler {
  position: relative;
  flex: 1;
  border: solid #000;
  border-width: 1px 1px 0;
  background: #222;
  overflow: hidden;
}
.hms {
  position: absolute;
  left: 5px;
  top: 4px;
}
.tick {
  position: absolute;
  bottom: 1px;
  width: 1px;
  height: 8px;
  background: #8c8c8c;
  font-style: normal;
}
.major {
  height: 12px;
}
.tick span {
  position: absolute;
  bottom: 15px;
  left: -30px;
  width: 60px;
  text-align: center;
}
.tracks {
  flex: 1;
  min-height: 0;
  overflow: hidden;
  display: grid;
  grid-template-rows: 199px 200px 199px 200px 200px;
}
.track {
  display: flex;
  border-bottom: 5px solid #313131;
  background: #232323;
}
.track.selected {
  background: #303030;
}
.swatch {
  width: 19px;
  border-radius: 6px 0 0 6px;
}
.strip {
  width: 318px;
  flex: none;
  display: flex;
  justify-content: space-between;
  padding: 9px 6px 0 6px;
  border-right: 1px solid #2e2e2e;
}
.controls {
  width: 272px;
}
.row {
  display: flex;
  align-items: center;
  justify-content: space-between;
}
.title {
  height: 28px;
  padding-left: 6px;
  font-size: 16px;
}
.title span {
  margin: 0 auto 0 7px;
}
.msr {
  display: flex;
  gap: 5px;
}
.msr button,
.meterCol button,
.phase {
  width: 28px;
  height: 28px;
  background: #1d1d1d;
  border: 1px solid #303030;
  border-radius: 3px;
  font-size: 14px;
}
.msr .lit {
  color: #fff;
}
.knobs {
  height: 28px;
  margin-top: 7px;
  justify-content: flex-start;
  gap: 7px;
}
.val {
  color: #2f8ce6;
  font-size: 16px;
}
.pan {
  margin-left: 34px;
}
.mon {
  margin: 0 2px 0 auto;
}
.input {
  margin-top: 5px;
}
.output {
  margin-top: 4px;
}
.auto {
  margin-top: 17px;
}
.field {
  height: 29px;
  background: #1d1d1d;
  border: 1px solid #303030;
  border-radius: 2px;
  color: #c4c4c4;
}
button.field {
  justify-content: space-between;
  padding: 0 9px 0 10px;
  width: 246px;
}
.input button.field {
  width: 213px;
}
.auto .field {
  width: 246px;
}
.auto .field select {
  padding-left: 10px;
}
.auto > svg {
  margin-left: 2px;
  color: #c4c4c4;
}
.meterCol {
  display: flex;
  flex-direction: column;
  gap: 14px;
}
.meter {
  display: grid;
  grid-template-columns: 1fr 1fr;
  grid-template-rows: 11px 1fr;
  gap: 2px;
  width: 26px;
  height: 133px;
  padding: 1px;
  margin-left: 1px;
  background: #000;
}
.meter b {
  background: #1c1c1c;
}
.meter i {
  border-bottom: 2px solid #c9bd3a;
  background: #1c1c1c;
}
.meter i:nth-child(3) {
  margin-right: -1px;
}
.meter i:nth-child(4) {
  margin-left: -1px;
  border-image: linear-gradient(90deg, #000 1px, #c9bd3a 1px) 2;
  border-width: 0 0 2px;
}
.lane {
  position: relative;
  flex: 1;
  overflow: hidden;
  background: #1d1d1d;
}
.track.selected .lane {
  background: #4c4c4c;
}
.clip {
  position: absolute;
  top: 0;
  bottom: 0;
  overflow: hidden;
  font-size: 13px;
  color: #b0bfb8;
}
.voice {
  background: #1c3029;
  border-left: 2px solid #a3b3ac;
  border-right: 1px solid #14211c;
}
.room {
  background: #332147;
  border-left: 2px solid #a99cb5;
  border-right: 1px solid #22172f;
  color: #b9adc4;
}
.picked {
  background: #125740;
  border: 2px solid #eef4f1;
  border-radius: 3px;
  color: #fff;
  font-weight: 500;
}
.graph {
  position: absolute;
  left: 0;
  top: 0;
  overflow: visible;
}
.room .graph {
  left: -2px;
}
.picked .graph {
  margin-top: -2px;
}
.body {
  fill: #35a883;
}
.picked .body {
  fill: #46d8a8;
}
.room .body {
  fill: #a56fe0;
}
.gain {
  stroke: #d6d88a;
  stroke-opacity: 0.7;
  stroke-width: 3;
}
.panLine {
  stroke: #7dcdc6;
  stroke-width: 3;
}
.picked .panLine {
  stroke: #b4eef0;
}
.room .panLine {
  stroke: #7282a5;
}
.level {
  fill: none;
  stroke: #a89b88;
  stroke-width: 3;
}
.fades {
  fill: none;
  stroke: #9f8142;
  stroke-width: 3;
}
.label {
  position: absolute;
  left: 2px;
  top: 0;
  white-space: nowrap;
}
.picked .label {
  left: 1px;
  top: -2px;
}
.clipMenu {
  position: absolute;
  right: 11px;
  top: 6px;
}
.panLabel {
  position: absolute;
  right: 10px;
  top: -2px;
  display: flex;
  align-items: center;
  gap: 9px;
}
.fadeIn {
  position: absolute;
  left: 17px;
  top: 21px;
}
.fadeOut {
  position: absolute;
  right: 14px;
  top: 21px;
}
.corner {
  position: absolute;
  bottom: 0;
  width: 10px;
  height: 10px;
  background: repeating-linear-gradient(45deg, #46d8a8 0 1px, #125740 1px 3px);
  clip-path: polygon(0 0, 100% 100%, 0 100%);
}
.bl {
  left: 0;
}
.br {
  right: 0;
  transform: scaleX(-1);
}
.signal {
  position: absolute;
  bottom: 14px;
  color: #b4c4bd;
}
.room .signal {
  color: #c3b6cf;
}
.flag {
  position: absolute;
  left: 18px;
  top: 17px;
  color: #8c8c8c;
}
.flagText {
  position: absolute;
  left: 36px;
  top: 18px;
  font-size: 15px;
  color: #a8b0ac;
}
.flagLine {
  position: absolute;
  left: 24px;
  top: 40px;
  bottom: 0;
  border-left: 2px dotted #e8e8e8;
}
.head {
  position: absolute;
  left: 367px;
  top: 19px;
  color: #2f8ce6;
}
.ghost {
  left: 334px;
  color: #26568a;
}
.headLine {
  position: absolute;
  left: 375px;
  top: 38px;
  bottom: 0;
  border-left: 1px solid #b01616;
}
.dashed {
  left: 342px;
  border-left: 1px dashed #8f1a1a;
}
.vscroll {
  position: relative;
  width: 40px;
  margin-bottom: 5px;
  padding: 45px 16px 0 4px;
  display: flex;
  flex-direction: column;
  gap: 5px;
}
.vscroll::before {
  content: "";
  position: absolute;
  left: 2px;
  top: 45px;
  bottom: 0;
  width: 24px;
  background: linear-gradient(#2c2c2c 0 611px, #000 611px);
}
.vscroll > i {
  position: relative;
  flex: 1;
}
.split {
  background: linear-gradient(#60465f 0 82px, #3a1c3a 82px);
}
.vwindow {
  position: absolute;
  left: 1px;
  top: 43px;
  width: 27px;
  height: 613px;
  display: flex;
  flex-direction: column;
  justify-content: space-between;
  align-items: center;
  border: 3px solid #6a6a6a;
  border-radius: 4px;
}
.vwindow b {
  width: 18px;
  height: 10px;
  margin: -6px 0;
  border: 3px solid #6a6a6a;
  border-radius: 4px;
  background: #333;
}
.transport {
  display: flex;
  align-items: center;
  height: 54px;
  padding: 0 17px 0 16px;
}
.clock {
  flex: 1;
  color: #2f8ce6;
  font-size: 24px;
  line-height: 30px;
  padding-top: 4px;
}
.buttons {
  display: flex;
}
.buttons button {
  width: 44px;
  height: 30px;
}
.buttons.play {
  margin-right: 25px;
}

/* Essential Sound */
.essential {
  width: 573px;
  flex: none;
  margin-right: 2px;
}
.essential .tabs,
.clipName,
.preset,
.blank {
  border-bottom: 1px solid #303030;
}
.essential .tabs {
  height: 44px;
  padding: 0 0 5px 16px;
}
.clipName {
  height: 45px;
  padding: 15px 0 0 16px;
  font-size: 16px;
}
.preset {
  display: flex;
  align-items: flex-start;
  gap: 9px;
  height: 54px;
  padding: 10px 15px 0 16px;
}
.preset label {
  padding-top: 5px;
}
.preset .pick {
  flex: 1;
  height: 30px;
}
.blank {
  height: 47px;
}
.assign {
  display: flex;
  flex-direction: column;
  gap: 16px;
  padding: 34px 30px 0 31px;
}
.assign p {
  margin: 0 0 -1px;
  font-size: 19px;
  line-height: 28px;
  color: #606060;
}
.assign button {
  height: 44px;
  padding-left: 16px;
  border: 1px solid #303030;
  border-radius: 3px;
  background: #1d1d1d;
  font-size: 16px;
}
.typeIcon {
  display: flex;
  justify-content: flex-end;
  width: 50%;
  padding-right: 9px;
}
.typeText {
  width: 50%;
  text-align: left;
}

/* Levels and selection */
.levels {
  flex: 1;
  height: 144px;
}
.levels .tabs,
.selview .tabs {
  padding-left: 16px;
}
.levelBox {
  display: flex;
  height: 65px;
  margin: 10px 9px 0;
  padding: 1px;
  gap: 2px;
  border: 1px solid #000;
  background: #000;
}
.levelBars,
.peaks {
  display: flex;
  flex-direction: column;
}
.levelBars {
  flex: 1;
}
.levelBars i,
.peaks i {
  flex: 1;
  background: #1d1d1d;
}
.levelBars i {
  border-left: 2px solid #c9c21c;
}
.peaks {
  width: 12px;
  gap: 2px;
}
.scale {
  margin: 0 25px 0 10px;
}
.ticks,
.dbs {
  display: flex;
  justify-content: space-between;
}
.ticks i {
  width: 1px;
  height: 3px;
  background: #8c8c8c;
}
.ticks .big {
  height: 6px;
}
.dbs span {
  width: 0;
  display: flex;
  justify-content: center;
}
.dbs span:first-child {
  justify-content: flex-start;
}
.dbs em {
  font-style: normal;
  font-size: 13px;
  line-height: 24px;
}
.selview {
  width: 417px;
}
.selview table {
  table-layout: fixed;
  width: 380px;
  margin: 6px 0 0 16px;
  border-spacing: 0;
  text-align: left;
}
.selview tr {
  height: 31px;
}
.selview thead tr {
  height: 26px;
}
.selview th {
  padding: 0;
  font-weight: 400;
}
.selview td {
  padding: 0;
  color: #2f8ce6;
  font-size: 16px;
}
.selview th:first-child {
  width: 77px;
}
.selview th:nth-child(2),
.selview th:nth-child(3) {
  width: 108px;
}

/* Status bar */
.status {
  height: 30px;
  flex: none;
  display: flex;
  align-items: center;
  margin-top: 3px;
  background: #232323;
  font-size: 16px;
}
.message {
  flex: 1;
  padding-left: 2px;
}
.cell {
  width: 75px;
  height: 22px;
  padding-left: 13px;
  border-left: 1px solid #1a1a1a;
  line-height: 26px;
  white-space: nowrap;
}
.rate {
  width: 267px;
}
.size {
  width: 102px;
}
.len {
  width: 108px;
}
.free.cell {
  width: 131px;
}
.end {
  width: 72px;
}
.edge {
  height: 4px;
  flex: none;
  background: linear-gradient(#b5b9c5 0 2px, #e3e9f7 2px);
}
</style>
